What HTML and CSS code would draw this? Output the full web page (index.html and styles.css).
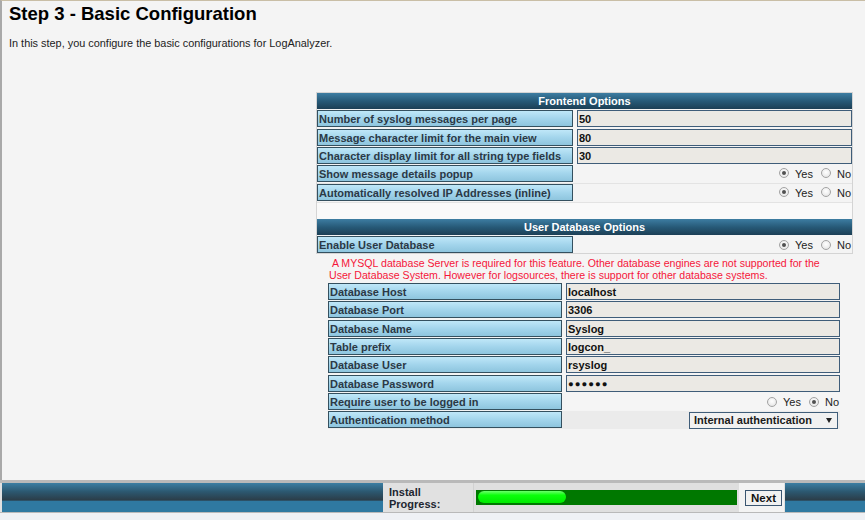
FILE: index.html
```html
<!DOCTYPE html>
<html>
<head>
<meta charset="utf-8">
<title>Step 3 - Basic Configuration</title>
<link rel="stylesheet" href="styles.css">
</head>
<body>
<div class="main">
  <h1 class="title">Step 3 - Basic Configuration</h1>
  <p class="intro">In this step, you configure the basic configurations for LogAnalyzer.</p>

  <div class="cfg-wrap">
    <div class="cfg">
      <div class="head">Frontend Options</div>
      <div class="row"><div class="label">Number of syslog messages per page</div><div class="field">50</div></div>
      <div class="row"><div class="label">Message character limit for the main view</div><div class="field">80</div></div>
      <div class="row"><div class="label">Character display limit for all string type fields</div><div class="field">30</div></div>
      <div class="row choice-row"><div class="label">Show message details popup</div><div class="choice"><span class="radio on"></span><span class="opt">Yes</span><span class="radio"></span><span class="opt">No</span></div></div>
      <div class="row choice-row"><div class="label">Automatically resolved IP Addresses (inline)</div><div class="choice"><span class="radio on"></span><span class="opt">Yes</span><span class="radio"></span><span class="opt">No</span></div></div>
      <div class="spacer"></div>
      <div class="head">User Database Options</div>
      <div class="row"><div class="label">Enable User Database</div><div class="choice"><span class="radio on"></span><span class="opt">Yes</span><span class="radio"></span><span class="opt">No</span></div></div>
    </div>

    <div class="sub">
      <p class="warn">&nbsp;A MYSQL database Server is required for this feature. Other database engines are not supported for the<br>User Database System. However for logsources, there is support for other database systems.</p>
      <div class="row srow"><div class="label">Database Host</div><div class="field">localhost</div></div>
      <div class="row srow"><div class="label">Database Port</div><div class="field">3306</div></div>
      <div class="row srow"><div class="label">Database Name</div><div class="field">Syslog</div></div>
      <div class="row srow"><div class="label">Table prefix</div><div class="field">logcon_</div></div>
      <div class="row srow"><div class="label">Database User</div><div class="field">rsyslog</div></div>
      <div class="row srow"><div class="label">Database Password</div><div class="field pw">&#9679;&#9679;&#9679;&#9679;&#9679;&#9679;</div></div>
      <div class="row srow light"><div class="label">Require user to be logged in</div><div class="choice"><span class="radio"></span><span class="opt">Yes</span><span class="radio on"></span><span class="opt">No</span></div></div>
      <div class="row srow dark"><div class="label">Authentication method</div><div class="choice"><span class="select">Internal authentication<span class="arrow"></span></span></div></div>
    </div>
  </div>
</div>

<div class="bar">
  <div class="blue blue-left"></div>
  <div class="bar-label">Install<br>Progress:</div>
  <div class="bar-progress"><div class="track"><div class="fill"></div></div></div>
  <div class="bar-next"><span class="btn">Next</span></div>
  <div class="blue blue-right"></div>
</div>
</body>
</html>
```

FILE: styles.css
```css
html, body {
  margin: 0;
  padding: 0;
}

body {
  background: #eff1f5;
  font-family: "Liberation Sans", Arial, sans-serif;
  font-size: 11px;
  color: #222;
}

.main {
  box-sizing: border-box;
  height: 480px;
  border-top: 1px solid #c9bea6;
  border-left: 2px solid #a9a9a9;
  background: #f4f4f4;
  padding: 2px 0 0 7px;
}

.title {
  margin: 0;
  font-size: 18.5px;
  line-height: 22px;
  font-weight: bold;
  color: #000;
}

.intro {
  margin: 11.4px 0 0;
  line-height: 14px;
  font-size: 10.9px;
  color: #222;
}

.cfg-wrap {
  box-sizing: border-box;
  width: 537px;
  margin: 41.6px 12px 0 auto;
}

.cfg {
  border: 1px solid #d4d4d4;
  background: #f4f4f4;
}

.head {
  height: 16px;
  line-height: 16px;
  text-align: center;
  color: #fff;
  font-weight: bold;
  background: linear-gradient(to bottom, #3d7da2 0%, #275a78 50%, #1c3f55 100%);
}

.row {
  display: grid;
  grid-template-columns: 256px 1fr;
  column-gap: 4px;
  height: 17px;
  margin-top: 1.4px;
}

.label {
  box-sizing: border-box;
  height: 17px;
  border: 1px solid #34505f;
  background: linear-gradient(to bottom, #bfe7f8 0%, #a3d5ec 50%, #8ec5de 100%);
  padding-left: 1px;
  line-height: 16px;
  font-weight: bold;
  color: #2b3946;
  white-space: nowrap;
  overflow: hidden;
}

.field {
  box-sizing: border-box;
  height: 17px;
  border: 1px solid #3f5d79;
  background: #ebe9e4;
  padding-left: 1px;
  line-height: 16px;
  font-weight: bold;
  color: #111;
}

.field.pw {
  font-size: 9.5px;
  letter-spacing: 1px;
}

.choice-row {
  height: 18px;
  border-bottom: 1px solid #e3e3e3;
  margin-top: 0.4px;
}

.choice {
  display: flex;
  align-items: center;
  justify-content: flex-end;
  padding-right: 1px;
  height: 17px;
  color: #222;
}

.radio {
  box-sizing: border-box;
  display: inline-block;
  width: 10px;
  height: 10px;
  border-radius: 50%;
  border: 1px solid #a3a3a3;
  background: radial-gradient(circle at 50% 40%, #ffffff 0%, #f0f0f0 50%, #dcdcdc 100%);
  margin-right: 6px;
  position: relative;
}

.radio.on::after {
  content: "";
  position: absolute;
  left: 2px;
  top: 2px;
  width: 4px;
  height: 4px;
  border-radius: 50%;
  background: #505050;
}

.opt {
  margin-right: 8px;
  line-height: 17px;
  padding-top: 2px;
}

.opt:last-child {
  margin-right: 0;
}

.spacer {
  height: 16px;
  background: #f9f9f9;
}

.sub {
  margin: 0 13px 0 11px;
}

.warn {
  margin: 3px 0 0.5px;
  padding-left: 2px;
  line-height: 12px;
  font-size: 10.6px;
  color: #f5163a;
}

.srow {
  grid-template-columns: 234px 1fr;
  column-gap: 4px;
  margin-left: 1px;
}

.srow.light .choice {
  background: #f5f5f5;
}

.srow.dark {
  background: #ebebeb;
  height: 18.5px;
  margin-top: 0.8px;
}

.srow.dark .choice {
  height: 18.5px;
}

.select {
  box-sizing: border-box;
  display: inline-flex;
  align-items: center;
  width: 149px;
  height: 17px;
  border: 1px solid #3f5d79;
  background: #f1f1f1;
  padding-left: 4px;
  font-weight: bold;
  color: #1a1a1a;
  margin-right: 1px;
}

.arrow {
  width: 0;
  height: 0;
  border-left: 3px solid transparent;
  border-right: 3px solid transparent;
  border-top: 5px solid #222;
  margin-left: auto;
  margin-right: 5px;
}

.bar {
  display: flex;
  height: 29px;
  border-top: 3px solid #b9b9b9;
  border-bottom: 1px solid #b9b9b9;
  background: #e1e1e1;
}

.blue {
  background: linear-gradient(to bottom, #3b7ea3 0%, #2c5870 30%, #2b3c47 60%, #2f79a1 61%, #2f79a1 100%);
}

.blue-left {
  width: 381px;
  margin-left: 2px;
}

.blue-right {
  flex: 1;
  margin-left: 1px;
}

.bar-label {
  box-sizing: border-box;
  width: 90px;
  padding: 3px 0 0 6px;
  line-height: 12px;
  font-weight: bold;
  color: #1d2630;
  background: #e1e1e1;
}

.bar-progress {
  box-sizing: border-box;
  width: 266px;
  padding: 7px 0 0 2px;
  background: #dfdfdf;
  border-left: 1px solid #d2d2d2;
}

.track {
  width: 261px;
  height: 15px;
  background: #007800;
  padding: 1px 0 0 2px;
  box-sizing: border-box;
}

.fill {
  width: 88px;
  height: 12px;
  border-radius: 6px;
  background: linear-gradient(to bottom, #6dff6d 0%, #0bff0b 35%, #00ea00 100%);
}

.bar-next {
  box-sizing: border-box;
  width: 45px;
  padding: 7px 0 0 6px;
  background: #f3f3f3;
}

.btn {
  box-sizing: border-box;
  display: inline-block;
  width: 37px;
  height: 16px;
  border: 1px solid #3a5570;
  background: #f1f1f1;
  text-align: center;
  line-height: 14px;
  font-weight: bold;
  font-size: 11.5px;
  color: #111;
}
```
